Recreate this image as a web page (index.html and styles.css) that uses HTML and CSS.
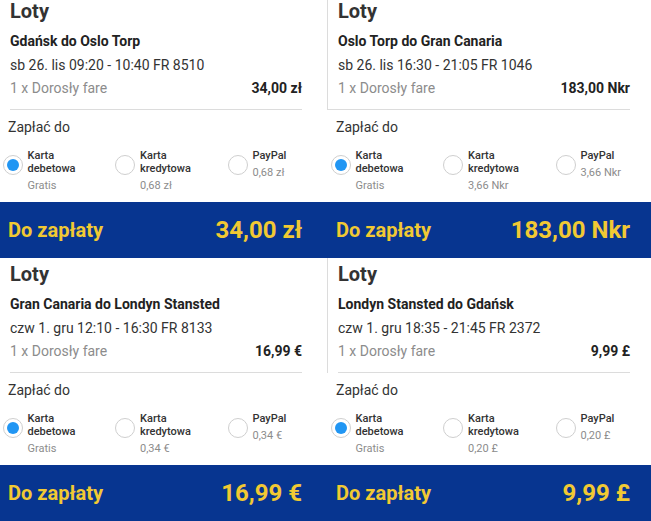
FILE: index.html
```html
<!DOCTYPE html>
<html lang="pl">
<head>
    <meta charset="UTF-8">
    <meta name="viewport" content="width=device-width, initial-scale=1.0">
    <title>Loty - płatność</title>
    <link rel="stylesheet" href="styles.css">
</head>
<body>
<div class="board">

    <!-- Gdańsk -> Oslo -->
    <div class="cell top">
        <div class="head">
            <div class="info">
                <h2>Loty</h2>
                <div class="route">Gdańsk do Oslo Torp</div>
                <div class="date">sb 26. lis 09:20 - 10:40 FR 8510</div>
                <div class="fare"><span>1 x Dorosły fare</span><b>34,00 zł</b></div>
            </div>
        </div>
        <div class="pay">
            <div class="pay-title">Zapłać do</div>
            <div class="options">
                <div class="option">
                    <span class="radio checked"></span>
                    <div><div class="name">Karta debetowa</div><div class="fee">Gratis</div></div>
                </div>
                <div class="option">
                    <span class="radio"></span>
                    <div><div class="name">Karta kredytowa</div><div class="fee">0,68 zł</div></div>
                </div>
                <div class="option">
                    <span class="radio"></span>
                    <div><div class="name">PayPal</div><div class="fee">0,68 zł</div></div>
                </div>
            </div>
        </div>
        <div class="total"><span>Do zapłaty</span><span class="amount">34,00 zł</span></div>
    </div>

    <!-- Oslo -> Gran Canaria -->
    <div class="cell top">
        <div class="head">
            <div class="info wide">
                <h2>Loty</h2>
                <div class="route">Oslo Torp do Gran Canaria</div>
                <div class="date">sb 26. lis 16:30 - 21:05 FR 1046</div>
                <div class="fare"><span>1 x Dorosły fare</span><b>183,00 Nkr</b></div>
            </div>
        </div>
        <div class="pay">
            <div class="pay-title">Zapłać do</div>
            <div class="options">
                <div class="option">
                    <span class="radio checked"></span>
                    <div><div class="name">Karta debetowa</div><div class="fee">Gratis</div></div>
                </div>
                <div class="option">
                    <span class="radio"></span>
                    <div><div class="name">Karta kredytowa</div><div class="fee">3,66 Nkr</div></div>
                </div>
                <div class="option">
                    <span class="radio"></span>
                    <div><div class="name">PayPal</div><div class="fee">3,66 Nkr</div></div>
                </div>
            </div>
        </div>
        <div class="total"><span>Do zapłaty</span><span class="amount">183,00 Nkr</span></div>
    </div>

    <!-- Gran Canaria -> Londyn -->
    <div class="cell">
        <div class="head">
            <div class="info">
                <h2>Loty</h2>
                <div class="route">Gran Canaria do Londyn Stansted</div>
                <div class="date">czw 1. gru 12:10 - 16:30 FR 8133</div>
                <div class="fare"><span>1 x Dorosły fare</span><b>16,99 €</b></div>
            </div>
        </div>
        <div class="pay">
            <div class="pay-title">Zapłać do</div>
            <div class="options">
                <div class="option">
                    <span class="radio checked"></span>
                    <div><div class="name">Karta debetowa</div><div class="fee">Gratis</div></div>
                </div>
                <div class="option">
                    <span class="radio"></span>
                    <div><div class="name">Karta kredytowa</div><div class="fee">0,34 €</div></div>
                </div>
                <div class="option">
                    <span class="radio"></span>
                    <div><div class="name">PayPal</div><div class="fee">0,34 €</div></div>
                </div>
            </div>
        </div>
        <div class="total"><span>Do zapłaty</span><span class="amount">16,99 €</span></div>
    </div>

    <!-- Londyn -> Gdańsk -->
    <div class="cell">
        <div class="head">
            <div class="info">
                <h2>Loty</h2>
                <div class="route">Londyn Stansted do Gdańsk</div>
                <div class="date">czw 1. gru 18:35 - 21:45 FR 2372</div>
                <div class="fare"><span>1 x Dorosły fare</span><b>9,99 £</b></div>
            </div>
        </div>
        <div class="pay">
            <div class="pay-title">Zapłać do</div>
            <div class="options">
                <div class="option">
                    <span class="radio checked"></span>
                    <div><div class="name">Karta debetowa</div><div class="fee">Gratis</div></div>
                </div>
                <div class="option">
                    <span class="radio"></span>
                    <div><div class="name">Karta kredytowa</div><div class="fee">0,20 £</div></div>
                </div>
                <div class="option">
                    <span class="radio"></span>
                    <div><div class="name">PayPal</div><div class="fee">0,20 £</div></div>
                </div>
            </div>
        </div>
        <div class="total"><span>Do zapłaty</span><span class="amount">9,99 £</span></div>
    </div>

</div>
</body>
</html>
```

FILE: styles.css
```css
body {
    font-family: Roboto, "Liberation Sans", Arial, sans-serif;
    margin: 0;
    padding: 0;
    background: #fff;
    color: #333;
    overflow: hidden;
}

.board {
    display: grid;
    grid-template-columns: 328px 328px;
    grid-template-rows: 258px 263px;
    width: 656px;
}

.cell {
    display: flex;
    flex-direction: column;
    padding-top: 5px;
}

.cell.top {
    padding-top: 0;
}

/* flight details, with the thin divider on the right */
.head {
    border-right: 1px solid #dcdcdc;
    padding-right: 25px;
    margin-top: -5px;
    padding-top: 5px;
}

.cell.top .head {
    margin-top: 0;
    padding-top: 0;
}

.info {
    margin-left: 10px;
    padding-bottom: 8px;
    border-bottom: 1px solid #dcdcdc;
}

.info.wide {
    margin-left: 0;
    padding-left: 10px;
}

h2 {
    margin: 0;
    font-size: 20px;
    line-height: 22px;
    font-weight: 700;
    color: #333;
}

.route, .date, .fare {
    font-size: 14px;
    line-height: 23.5px;
}

.route {
    margin-top: 8px;
    font-weight: 700;
    color: #222;
}

.date {
    color: #333;
}

.fare {
    display: flex;
    justify-content: space-between;
    color: #8c8c8c;
}

.fare b {
    color: #222;
}

.pay {
    padding-top: 7px;
}

.pay-title {
    font-size: 14px;
    line-height: 20px;
    padding-left: 8px;
    color: #333;
}

.options {
    display: grid;
    grid-template-columns: 112.5px 112.5px 1fr;
    padding-left: 2.5px;
    margin-top: 12.5px;
}

.option {
    display: flex;
    gap: 5px;
}

.radio {
    flex: none;
    width: 18px;
    height: 18px;
    margin-top: 6px;
    border: 1px solid #cfcfcf;
    border-radius: 50%;
    display: flex;
    align-items: center;
    justify-content: center;
}

.radio.checked::after {
    content: "";
    width: 12px;
    height: 12px;
    border-radius: 50%;
    background: #2196f3;
}

.name {
    max-width: 62px;
    font-size: 11px;
    line-height: 13px;
    font-weight: 500;
    color: #333;
}

.fee {
    margin-top: 4px;
    font-size: 11px;
    line-height: 13px;
    color: #8c8c8c;
}

.total {
    margin-top: auto;
    height: 56px;
    background: #073590;
    color: #f1c933;
    font-weight: 700;
    display: flex;
    justify-content: space-between;
    align-items: center;
    padding: 0 26px 0 8px;
    font-size: 20px;
}

.total .amount {
    font-size: 24px;
}
```
